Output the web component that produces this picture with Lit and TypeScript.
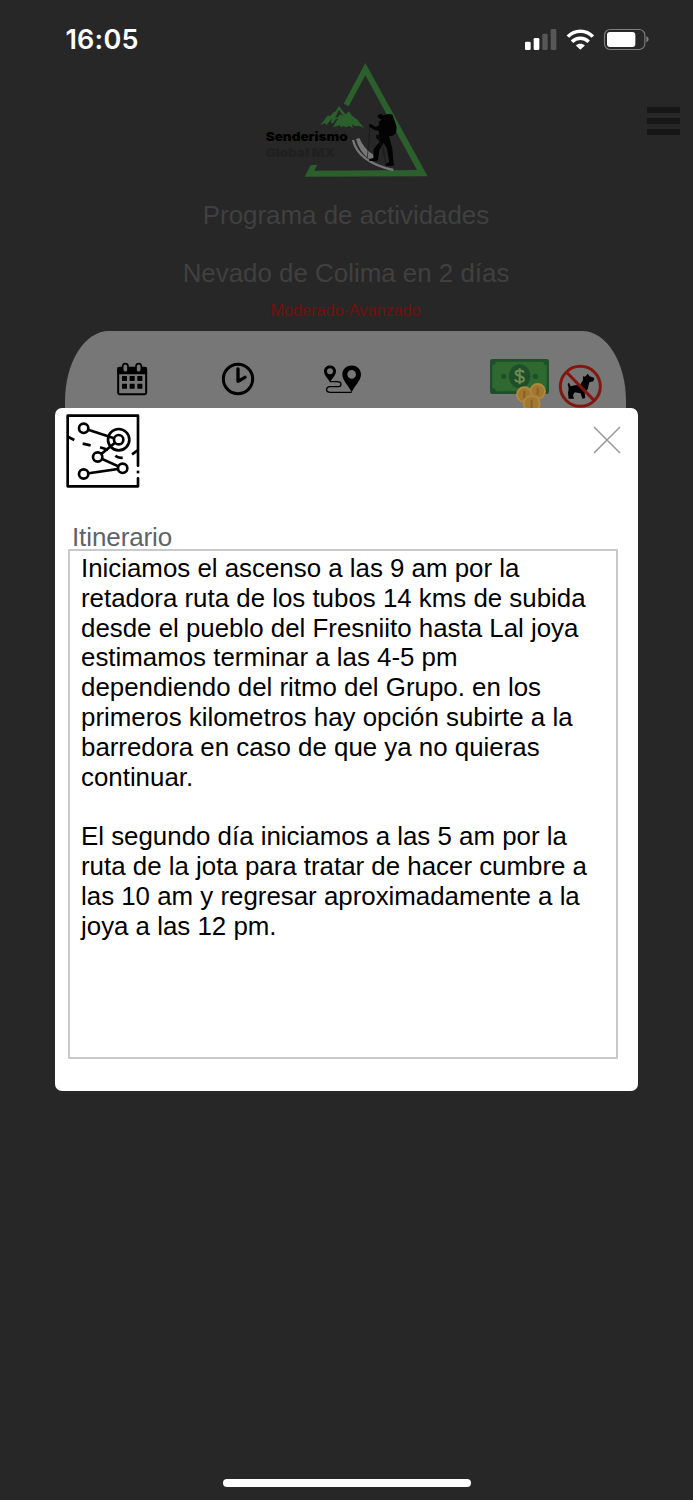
import { LitElement, html, css } from "lit";
import { customElement } from "lit/decorators.js";

const ITINERARY = `Iniciamos el ascenso a las 9 am por la
retadora ruta de los tubos 14 kms de subida
desde el pueblo del Fresniito hasta Lal joya
estimamos terminar a las 4-5 pm
dependiendo del ritmo del Grupo. en los
primeros kilometros hay opción subirte a la
barredora en caso de que ya no quieras
continuar.

El segundo día iniciamos a las 5 am por la
ruta de la jota para tratar de hacer cumbre a
las 10 am y regresar aproximadamente a la
joya a las 12 pm.`;

@customElement("status-bar")
class StatusBar extends LitElement {
  static styles = css`
    :host { display: flex; justify-content: space-between; box-sizing: border-box; height: 55px; padding: 22px 43px 0 65.500px; }
    .time { font: 600 27px/36px Inter, sans-serif; letter-spacing: 0.2px; color: #fff; }
    svg { display: block; width: 126px; height: 34px; }
  `;
  render() {
    return html`
      <span class="time">16:05</span>
      <svg viewBox="42 21 378 102">
        <g fill="#fff">
          <rect x="45" y="80" width="17" height="25" rx="4" />
          <rect x="71" y="69" width="17" height="36" rx="4" />
        </g>
        <g fill="#575757">
          <rect x="97" y="56" width="16" height="49" rx="4" />
          <rect x="122" y="42" width="17" height="63" rx="4" />
        </g>
        <g fill="none" stroke="#fff" stroke-width="10.5">
          <path d="M173.500 65C194 43 229 43 248.500 65" />
          <path d="M186 80C200 66 222 66 236 80" />
        </g>
        <path fill="#fff" d="M197.500 91.500C205 84 217 84 224.500 91.500L211 104Z" />
        <rect x="283.500" y="43.500" width="121" height="60" rx="17" fill="none" stroke="#7d7d7d" stroke-width="3.500" />
        <rect x="291" y="51" width="85" height="45" rx="9" fill="#fff" />
        <path fill="#7d7d7d" d="M409 64C418 66 418 80 409 82Z" />
      </svg>
    `;
  }
}

@customElement("brand-header")
class BrandHeader extends LitElement {
  static styles = css`
    :host { display: grid; grid-template-columns: 250px 190px 1fr; height: 130px; }
    .logo { grid-column: 2; display: block; width: 190px; height: 130px; }
    .brand { font-family: Inter, sans-serif; font-weight: 900; font-size: 37px; }
    .menu { display: flex; flex-direction: column; gap: 4.400px; margin: 51.500px 13px 0 auto; }
    .bar { width: 33px; height: 6.700px; background: #161616; }
  `;
  render() {
    return html`
      <svg class="logo" viewBox="0 0 570 390">
        <path fill="#2b5f2c" d="M346 24L533 364L164 365L182 331L202 329L193 347L501 345L346 61L296 154L281 146Z" />
        <path fill="#2b5f2c" d="M210 211L222 196L234 181L240 184L249 173L257 169L267 152L276 165L287 178L297 169L307 183L320 192L342 219L326 212L317 214L306 208L309 219L298 213L287 217L281 213L272 217L269 211L249 217L258 200L266 190L255 194L249 206L243 202L246 190L235 203L230 211L225 204Z" />
        <path fill="#272727" d="M262 174L267 164L275 176L281 184L271 178L264 187L256 188Z" />
        <text class="brand" x="47" y="259" textLength="246" lengthAdjust="spacingAndGlyphs" fill="#000">Senderismo</text>
        <text class="brand" x="47" y="306" textLength="209" lengthAdjust="spacingAndGlyphs" fill="#202020">Global MX</text>
        <path fill="none" stroke="#777" stroke-width="7" d="M309 255Q325 322 430 345" />
        <path fill="#777" d="M318 252L328 249Q341 281 372 301L372 316L354 310Q327 287 318 252Z" />
        <path fill="#030303" d="M383 186C381 176 396 174 400 182C406 177 421 174 428 180L434 197L440 216L438 235L428 242L417 244L427 282L430 318L433 329L428 333L407 332L407 326L418 322L411 281L401 263L388 285L384 316L379 319L357 317L358 312L370 309L371 281L388 262L385 254L379 249L379 239L387 240L386 227L374 225L357 215L358 206L366 209L378 216L388 211L386 201L395 194Z" />
        <path fill="none" stroke="#171717" stroke-width="2" d="M360 213L352 309M384 240L408 326M399 270L404 304" />
      </svg>
      <div class="menu"><div class="bar"></div><div class="bar"></div><div class="bar"></div></div>
    `;
  }
}

@customElement("trip-card")
class TripCard extends LitElement {
  static styles = css`
    :host { display: flex; align-items: flex-start; box-sizing: border-box; width: 561px; height: 380px; margin: 0 auto 0 65px; padding: 27px 0 0 51px; background: #777; border-radius: 44px 44px 0 0 / 70px 70px 0 0; }
    svg { display: block; flex: none; }
    .calendar { width: 32px; height: 34px; margin: 4px 73px 0 0; }
    .clock { width: 34px; height: 34px; margin: 4px 68px 0 0; }
    .route { width: 39px; height: 34px; margin: 4px 127px 0 0; }
    .money { width: 61px; height: 57px; margin-right: 8px; }
    .dog { width: 45px; height: 45px; margin-top: 6px; }
  `;
  render() {
    return html`
      <svg class="calendar" viewBox="48 36 96 102">
        <rect x="54.500" y="53" width="84" height="79.500" rx="4" fill="none" stroke="#000" stroke-width="6" />
        <path d="M52 56Q52 51 57 51H136Q141 51 141 56V73H52Z" />
        <g fill="#777" stroke="#000" stroke-width="5">
          <rect x="68" y="41" width="16" height="26" rx="8" />
          <rect x="108" y="41" width="16" height="26" rx="8" />
        </g>
        <path d="M66 78h15v15h-15zM89 78h15v15h-15zM112 78h15v15h-15zM66 101h15v15h-15zM89 101h15v15h-15zM112 101h15v15h-15z" />
      </svg>
      <svg class="clock" viewBox="363 36 102 102">
        <circle cx="414" cy="87" r="44" fill="none" stroke="#000" stroke-width="9" />
        <path d="M414 57V94L435 82" fill="none" stroke="#000" stroke-width="10" stroke-linecap="round" stroke-linejoin="round" />
      </svg>
      <svg class="route" viewBox="669 36 117 102">
        <path fill="none" stroke="#000" stroke-width="4" d="M690 95H711C727 95 727 110 711 110H690C675 111 677 127 691 127H755" />
        <path fill-rule="evenodd" d="M690 97C682 82 672 77 672 64C672 41 708 41 708 64C708 77 698 82 690 97ZM690 55A9 9 0 1 0 690 73A9 9 0 1 0 690 55Z" />
        <path fill-rule="evenodd" d="M755 127C745 105 727 92 727 73C728 38 782 38 783 73C783 92 765 105 755 127ZM755 60A13 13 0 1 0 755 86A13 13 0 1 0 755 60Z" />
      </svg>
      <svg class="money" viewBox="27 39 183 171">
        <rect x="30" y="42" width="177" height="105" rx="7" fill="#1d4f2b" />
        <path fill="#2f6930" d="M48 50H190Q191 59 200 61V128Q191 130 190 139H48Q47 130 37 128V61Q47 59 48 50Z" />
        <ellipse cx="119" cy="94" rx="32" ry="36" fill="#1d4f2b" />
        <circle cx="71" cy="94" r="8" fill="#1d4f2b" /><circle cx="166" cy="94" r="8" fill="#1d4f2b" />
        <path fill="none" stroke="#6f8a4e" stroke-width="6" d="M132 83C129 74 107 74 107 84C107 95 132 91 132 103C132 114 108 113 105 103M119 70V118" />
        <g fill="#a0782f" stroke="#b0873f" stroke-width="6">
          <circle cx="173" cy="139" r="22" /><circle cx="133" cy="149" r="22" /><circle cx="155" cy="176" r="24" />
        </g>
        <path stroke="#8a6026" stroke-width="6" d="M173 128V150M133 138V160M155 164V188" />
      </svg>
      <svg class="dog" viewBox="234 57 135 135">
        <path d="M263 117L267 113L272 124L285 121L301 119L309 105L309 94L314 95L320 91L323 86L329 94L343 99L340 109L328 112L323 133L314 142L316 159L307 161L302 145L284 142L279 151L282 161H266L264 143L266 131Z" />
        <circle cx="301" cy="124" r="60" fill="none" stroke="#83170f" stroke-width="9" />
        <path stroke="#83170f" stroke-width="9" d="M259 81L343 167" />
      </svg>
    `;
  }
}

@customElement("itinerary-dialog")
class ItineraryDialog extends LitElement {
  static styles = css`
    :host { display: flex; flex-direction: column; box-sizing: border-box; padding: 6px 20px 32px 13px; background: #fff; border-radius: 7px; font-family: "Liberation Sans", Arial, sans-serif; }
    .top { display: flex; justify-content: space-between; margin-left: -2px; }
    .map { display: block; width: 74px; height: 74px; }
    .close { display: block; width: 28px; height: 28px; margin: 12px -3px 0 0; }
    .label { margin: 34px 0 0 4px; height: 27px; font-size: 26px; line-height: 30px; color: #5f6368; letter-spacing: -0.1px; }
    .field { flex: 1; box-sizing: border-box; border: 2px solid #c9c9c9; padding: 3px 0 0 11px; white-space: pre; font-size: 25.870px; line-height: 29.800px; color: #000; }
  `;
  render() {
    return html`
      <div class="top">
        <svg class="map" viewBox="48 42 222 222" fill="none" stroke="#000" stroke-width="8">
          <path d="M264 197V47H53V259H264V235" stroke-linejoin="round" stroke-linecap="round" />
          <path d="M260 216H268" />
          <path d="M101 85L206 119L143 171L218 205L101 222" />
          <path d="M55 111L73 120M98 131L122 136M150 142L174 149M196 167Q205 175 218 173M246 163L263 151" />
          <circle cx="206" cy="119" r="32" />
          <g fill="#fff">
            <circle cx="101" cy="85" r="14" /><circle cx="206" cy="119" r="14" /><circle cx="143" cy="171" r="14" />
            <circle cx="218" cy="205" r="14" /><circle cx="101" cy="222" r="14" />
          </g>
        </svg>
        <svg class="close" viewBox="0 0 28 28"><path d="M1 1L27 27M27 1L1 27" stroke="#979797" stroke-width="1.500" /></svg>
      </div>
      <div class="label">Itinerario</div>
      <div class="field">${ITINERARY}</div>
    `;
  }
}

@customElement("app-root")
class AppRoot extends LitElement {
  static styles = css`
    :host { display: flex; flex-direction: column; position: relative; box-sizing: border-box; width: 693px; height: 1500px; overflow: hidden; background: #272727; font-family: "Liberation Sans", Arial, sans-serif; text-align: center; }
    .title { font-size: 25.900px; line-height: 30px; color: #404040; margin-top: 15px; padding-right: 1px; }
    .trip { margin-top: 28px; }
    .level { font-size: 16.200px; line-height: 20px; margin: 12px 0 11px; padding-right: 2px; color: #6f120c; }
    itinerary-dialog { position: absolute; left: 55px; top: 408px; width: 583px; height: 683px; text-align: left; }
    .home { width: 248px; height: 8px; border-radius: 4px; background: #fff; margin: auto auto 13px 223px; }
  `;
  render() {
    return html`
      <status-bar></status-bar>
      <brand-header></brand-header>
      <div class="title">Programa de actividades</div>
      <div class="title trip">Nevado de Colima en 2 días</div>
      <div class="level">Moderado-Avanzado</div>
      <trip-card></trip-card>
      <itinerary-dialog></itinerary-dialog>
      <div class="home"></div>
    `;
  }
}
